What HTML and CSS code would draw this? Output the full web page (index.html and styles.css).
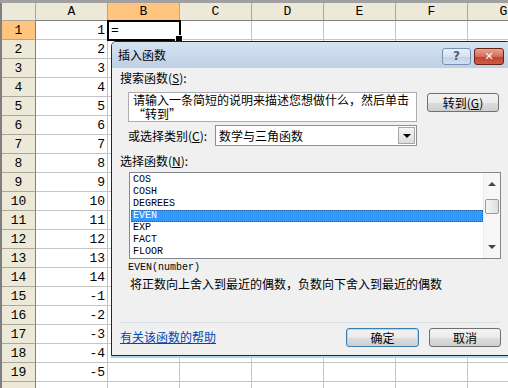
FILE: index.html
```html
<!DOCTYPE html>
<html lang="zh-CN">
<head>
  <meta charset="UTF-8" />
  <title>插入函数</title>
  <link rel="stylesheet" href="styles.css">
</head>
<body>
  <div class="sheet">
    <div class="topbar"></div>
    <div class="grid">
      <div class="corner"></div><div class="ch">A</div><div class="ch sel">B</div><div class="ch">C</div><div class="ch">D</div><div class="ch">E</div><div class="ch">F</div><div class="ch">G</div>

      <div class="rh sel">1</div><div class="c">1</div><div class="c active">=</div><div class="c"></div><div class="c"></div><div class="c"></div><div class="c"></div><div class="c"></div>
      <div class="rh">2</div><div class="c">2</div><div class="c"></div><div class="c"></div><div class="c"></div><div class="c"></div><div class="c"></div><div class="c"></div>
      <div class="rh">3</div><div class="c">3</div><div class="c"></div><div class="c"></div><div class="c"></div><div class="c"></div><div class="c"></div><div class="c"></div>
      <div class="rh">4</div><div class="c">4</div><div class="c"></div><div class="c"></div><div class="c"></div><div class="c"></div><div class="c"></div><div class="c"></div>
      <div class="rh">5</div><div class="c">5</div><div class="c"></div><div class="c"></div><div class="c"></div><div class="c"></div><div class="c"></div><div class="c"></div>
      <div class="rh">6</div><div class="c">6</div><div class="c"></div><div class="c"></div><div class="c"></div><div class="c"></div><div class="c"></div><div class="c"></div>
      <div class="rh">7</div><div class="c">7</div><div class="c"></div><div class="c"></div><div class="c"></div><div class="c"></div><div class="c"></div><div class="c"></div>
      <div class="rh">8</div><div class="c">8</div><div class="c"></div><div class="c"></div><div class="c"></div><div class="c"></div><div class="c"></div><div class="c"></div>
      <div class="rh">9</div><div class="c">9</div><div class="c"></div><div class="c"></div><div class="c"></div><div class="c"></div><div class="c"></div><div class="c"></div>
      <div class="rh">10</div><div class="c">10</div><div class="c"></div><div class="c"></div><div class="c"></div><div class="c"></div><div class="c"></div><div class="c"></div>
      <div class="rh">11</div><div class="c">11</div><div class="c"></div><div class="c"></div><div class="c"></div><div class="c"></div><div class="c"></div><div class="c"></div>
      <div class="rh">12</div><div class="c">12</div><div class="c"></div><div class="c"></div><div class="c"></div><div class="c"></div><div class="c"></div><div class="c"></div>
      <div class="rh">13</div><div class="c">13</div><div class="c"></div><div class="c"></div><div class="c"></div><div class="c"></div><div class="c"></div><div class="c"></div>
      <div class="rh">14</div><div class="c">14</div><div class="c"></div><div class="c"></div><div class="c"></div><div class="c"></div><div class="c"></div><div class="c"></div>
      <div class="rh">15</div><div class="c">-1</div><div class="c"></div><div class="c"></div><div class="c"></div><div class="c"></div><div class="c"></div><div class="c"></div>
      <div class="rh">16</div><div class="c">-2</div><div class="c"></div><div class="c"></div><div class="c"></div><div class="c"></div><div class="c"></div><div class="c"></div>
      <div class="rh">17</div><div class="c">-3</div><div class="c"></div><div class="c"></div><div class="c"></div><div class="c"></div><div class="c"></div><div class="c"></div>
      <div class="rh">18</div><div class="c">-4</div><div class="c"></div><div class="c"></div><div class="c"></div><div class="c"></div><div class="c"></div><div class="c"></div>
      <div class="rh">19</div><div class="c">-5</div><div class="c"></div><div class="c"></div><div class="c"></div><div class="c"></div><div class="c"></div><div class="c"></div>
      <div class="rh"></div><div class="c"></div><div class="c"></div><div class="c"></div><div class="c"></div><div class="c"></div><div class="c"></div><div class="c"></div>
    </div>

    <!-- Insert function dialog -->
    <div class="dialog">
      <div class="titlebar">
        <span class="title">插入函数</span>
        <div class="tb-btns">
          <span class="tb-help">?</span>
          <span class="tb-close">✕</span>
        </div>
      </div>

      <div class="dlg-body">
        <div class="label">搜索函数(<u>S</u>):</div>
        <div class="search-row">
          <div class="search-box">请输入一条简短的说明来描述您想做什么，然后单击<br>“转到”</div>
          <button class="btn go">转到(<u>G</u>)</button>
        </div>

        <div class="cat-row">
          <span class="label cat-label">或选择类别(<u>C</u>):</span>
          <div class="select">
            <span class="select-text">数学与三角函数</span>
            <span class="select-arrow"></span>
          </div>
        </div>

        <div class="label fn-label">选择函数(<u>N</u>):</div>
        <div class="listbox">
          <ul class="items">
            <li>COS</li>
            <li>COSH</li>
            <li>DEGREES</li>
            <li class="selected">EVEN</li>
            <li>EXP</li>
            <li>FACT</li>
            <li>FLOOR</li>
          </ul>
          <div class="scrollbar">
            <span class="sb-up"></span>
            <span class="sb-thumb"></span>
            <span class="sb-down"></span>
          </div>
        </div>

        <div class="syntax">EVEN(number)</div>
        <div class="desc">将正数向上舍入到最近的偶数，负数向下舍入到最近的偶数</div>

        <div class="footer">
          <a class="help" href="#">有关该函数的帮助</a>
          <div class="btns">
            <button class="btn default">确定</button>
            <button class="btn">取消</button>
          </div>
        </div>
      </div>
    </div>
  </div>
</body>
</html>
```

FILE: styles.css
```css
/* General */
* {
  box-sizing: border-box;
}

body {
  margin: 0;
  background: #fff;
  font-family: "Liberation Mono", monospace;
  color: #000;
}

.sheet {
  position: relative;
  width: 508px;
  height: 388px;
  overflow: hidden;
}

.topbar {
  height: 3px;
  background: #a0a0a0;
}

/* Spreadsheet grid */
.grid {
  display: grid;
  grid-template-columns: 34px repeat(7, 72px);
  grid-template-rows: 18px;
  grid-auto-rows: 19px;
  border-left: 2px solid #7f7f7f;
  font-size: 13px;
  width: 540px;
}

.corner, .ch, .rh {
  background: #ece9d8;
  border-right: 1px solid #aca899;
  border-bottom: 1px solid #aca899;
  display: flex;
  align-items: center;
  justify-content: center;
}

.ch {
  border-bottom-color: #7f7f7f;
}

.rh {
  border-right-color: #7f7f7f;
}

.ch.sel, .rh.sel {
  background: #ffc47e;
}

.c {
  border-right: 1px solid #c4c4c4;
  border-bottom: 1px solid #c4c4c4;
  display: flex;
  align-items: center;
  justify-content: flex-end;
  padding-right: 2px;
}

.c.active {
  justify-content: flex-start;
  padding-left: 3px;
  outline: 2px solid #000;
  outline-offset: -1px;
  position: relative;
  z-index: 1;
}

.c.active::after {
  content: "";
  position: absolute;
  right: -4px;
  bottom: -4px;
  width: 6px;
  height: 6px;
  background: #000;
  border: 1px solid #fff;
}

/* Dialog */
.dialog {
  position: absolute;
  left: 111px;
  top: 41px;
  width: 400px;
  height: 315px;
  z-index: 5;
  background: #f0f0f0;
  border: 1px solid #262626;
  border-radius: 5px 5px 0 0;
  box-shadow: 0 2px 0 #a9d6ea;
  font-family: "Noto Sans CJK SC", sans-serif;
  font-size: 12px;
}

.titlebar {
  height: 26px;
  display: flex;
  align-items: center;
  justify-content: space-between;
  padding: 0 6px;
  background: linear-gradient(#d5e2f1, #bed0e6);
  border-radius: 4px 4px 0 0;
}

.title {
  line-height: 14px;
}

.tb-btns {
  display: flex;
  gap: 3px;
  margin-top: 2px;
}

.tb-help, .tb-close {
  height: 17px;
  display: flex;
  align-items: center;
  justify-content: center;
  border-radius: 3px;
  font-family: "DejaVu Sans", sans-serif;
  font-weight: bold;
}

.tb-help {
  width: 29px;
  border: 1px solid #7890b0;
  background: linear-gradient(#e8eff7 0%, #d6e2ef 50%, #c0d2e7 51%, #d0def0 100%);
  color: #4d607a;
  font-size: 12px;
}

.tb-close {
  width: 30px;
  border: 1px solid #6b2016;
  background: linear-gradient(#e8a392 0%, #d36e5b 50%, #c0412b 51%, #cd5c44 100%);
  color: #fff;
  font-size: 11px;
}

.dlg-body {
  padding: 3px 0 0 8px;
}

.label {
  line-height: 14px;
}

u {
  text-decoration: underline;
}

.search-row {
  display: flex;
  align-items: flex-start;
  gap: 10px;
  margin: 7px 0 0 8px;
}

.search-box {
  width: 289px;
  height: 30px;
  background: #fff;
  border: 1px solid #abadb3;
  padding: 0 0 0 4px;
  line-height: 14px;
  white-space: nowrap;
}

/* Buttons */
.btn {
  height: 19px;
  width: 72px;
  padding: 0;
  font-family: "Noto Sans CJK SC", sans-serif;
  font-size: 12px;
  line-height: 14px;
  color: #000;
  border: 1px solid #707070;
  border-radius: 3px;
  background: linear-gradient(#f3f3f3 0%, #ebebeb 50%, #dddddd 51%, #cfcfcf 100%);
}

.btn.go {
  margin-top: 1px;
}

.btn.default {
  width: 73px;
  border-color: #3c7fb1;
  box-shadow: inset 0 0 0 1px #9fdcf5;
}

/* Category select */
.cat-row {
  display: flex;
  align-items: center;
  margin: 3px 0 0 8px;
}

.cat-label {
  width: 87px;
}

.select {
  width: 202px;
  height: 21px;
  display: flex;
  align-items: center;
  justify-content: space-between;
  background: #fff;
  border: 1px solid #8e8f8f;
  padding: 0 1px 0 3px;
}

.select-text {
  line-height: 14px;
}

.select-arrow {
  width: 17px;
  height: 17px;
  border: 1px solid #a7a7a7;
  background: linear-gradient(#f4f4f4, #dcdcdc);
  position: relative;
}

.select-arrow::after {
  content: "";
  position: absolute;
  left: 4px;
  top: 6px;
  border-left: 4px solid transparent;
  border-right: 4px solid transparent;
  border-top: 4px solid #000;
}

/* Function list */
.fn-label {
  margin-top: 8px;
}

.listbox {
  display: flex;
  width: 372px;
  height: 87px;
  margin: 4px 0 0 9px;
  background: #fff;
  border: 1px solid #828790;
}

.items {
  flex: 1;
  list-style: none;
  margin: 0;
  padding: 1px 0 0 1px;
  font-family: "Liberation Mono", monospace;
  font-size: 10px;
  line-height: 12px;
}

.items li {
  height: 12px;
  padding-left: 2px;
}

.items li.selected {
  background: #3399ff;
  color: #fff;
  outline: 1px dotted #1d5a99;
  outline-offset: -1px;
}

.scrollbar {
  width: 17px;
  display: flex;
  flex-direction: column;
  align-items: center;
  background: #f7f7f7;
  border-left: 1px solid #eaeaea;
  padding-top: 9px;
}

.sb-up {
  border-left: 4px solid transparent;
  border-right: 4px solid transparent;
  border-bottom: 4px solid #444;
}

.sb-thumb {
  width: 14px;
  height: 15px;
  margin-top: 13px;
  border: 1px solid #9b9b9b;
  border-radius: 2px;
  background: linear-gradient(to right, #f4f4f4, #dedede);
}

.sb-down {
  margin-top: 31px;
  border-left: 4px solid transparent;
  border-right: 4px solid transparent;
  border-top: 4px solid #444;
}

/* Description */
.syntax {
  margin: 3px 0 0 8px;
  font-family: "Liberation Mono", monospace;
  font-size: 10px;
  line-height: 12px;
}

.desc {
  margin: 3px 0 0 10px;
  line-height: 14px;
}

.footer {
  display: flex;
  justify-content: space-between;
  width: 380px;
  margin-top: 31px;
  padding-top: 5px;
  border-top: 1px solid #d7dfe5;
}

.help {
  color: #0645ad;
  text-decoration: underline;
  line-height: 14px;
  margin-top: 2px;
}

.btns {
  display: flex;
  gap: 10px;
  margin-right: -1px;
}
```
